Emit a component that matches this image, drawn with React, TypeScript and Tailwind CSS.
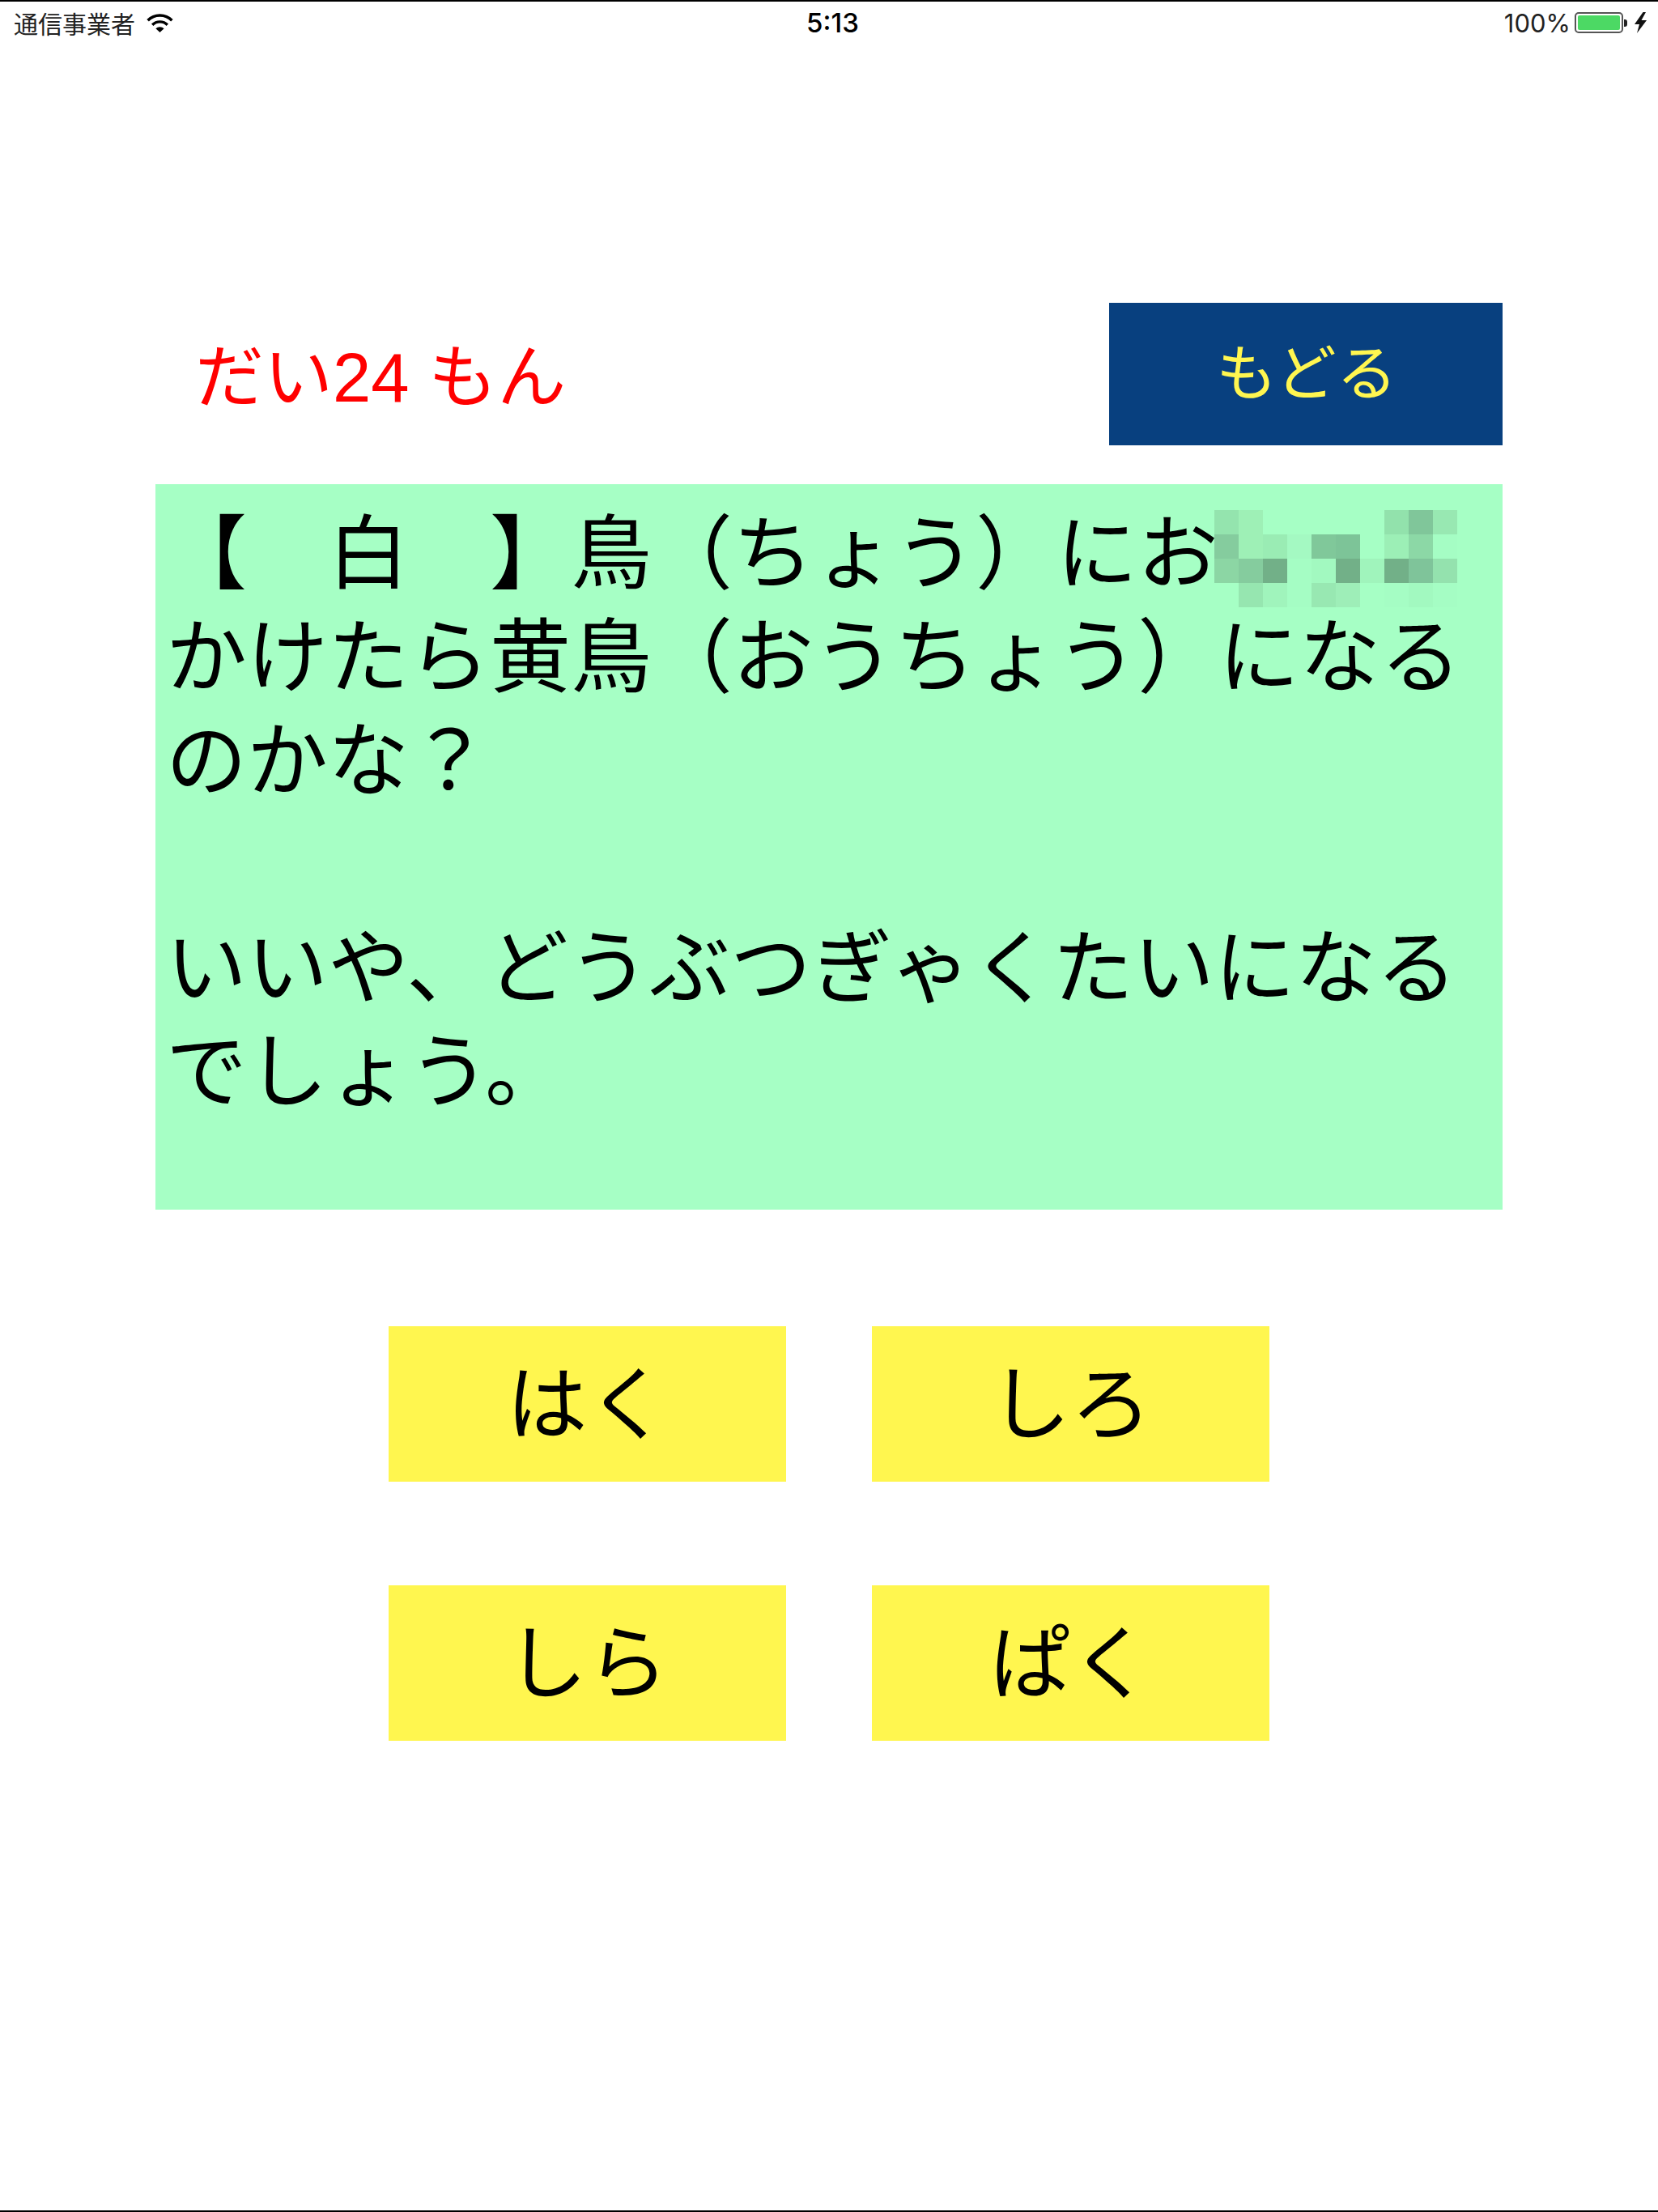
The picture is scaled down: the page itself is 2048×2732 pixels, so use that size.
const CJK = "font-['Liberation_Sans','Noto_Sans_CJK_JP',sans-serif]";

const C: Record<string, string> = {
  a: "bg-[#94e4ae]", b: "bg-[#9ef0b6]", c: "bg-[#92e2ac]", d: "bg-[#80c69a]", e: "bg-[#98e8b2]",
  f: "bg-[#85cc9e]", g: "bg-[#9aecb4]", h: "bg-[#a4f9c2]", i: "bg-[#80c89a]", j: "bg-[#7dc498]",
  k: "bg-[#9cefb6]", l: "bg-[#8cd8a6]", m: "bg-[#a5fdc4]", n: "bg-[#8cd6a4]", o: "bg-[#72b088]",
  p: "bg-[#a2f9c0]", q: "bg-[#a0f4bc]", r: "bg-[#7fc49a]", s: "bg-[#94e2ae]", t: "bg-[#96e6b0]",
  u: "bg-[#9eeeb8]", v: "bg-transparent",
};
const MOSAIC = ["abvvvvvcde", "fbghijvklm", "nfompoqors", "vtqmeuvmpm"];

function Wifi() {
  return (
    <svg viewBox="0 0 33 23" className="w-[33px] h-[23px] ml-[14px]" fill="none" stroke="#000">
      <path d="M1.6 8.2A21 21 0 0 1 31.4 8.2" strokeWidth="3.6" />
      <path d="M7.2 13.8A13 13 0 0 1 25.8 13.8" strokeWidth="3.4" />
      <path d="M11.4 18.2A7.4 7.4 0 0 1 21.6 18.2L16.5 23Z" fill="#000" stroke="none" />
    </svg>
  );
}

function Battery() {
  return (
    <div className="flex items-center ml-[5px]">
      <div className="w-[60px] h-[26px] rounded-[5px] border-2 border-[#555] p-[2px] bg-white">
        <div className="w-full h-full rounded-[2px] bg-[#4cd964]" />
      </div>
      <div className="w-[4px] h-[9px] rounded-r-[3px] bg-[#222] ml-[1px]" />
    </div>
  );
}

function Bolt() {
  return (
    <svg viewBox="0 0 15 26" className="w-[15px] h-[26px] ml-[9px]">
      <path d="M10.5 0L0 15H6L3 26L15 10H8.5L14 0Z" fill="#111" />
    </svg>
  );
}

function Answer({ label }: { label: string }) {
  return (
    <button className="h-[192px] bg-[#fff64f] flex items-center justify-center text-[100px] leading-none text-black pt-[2px]">
      {label}
    </button>
  );
}

export default function App() {
  return (
    <div className={`relative w-[2048px] h-[2732px] bg-white border-t-[2px] border-b-[2px] border-black overflow-hidden ${CJK}`}>
      <header className="h-[54px] pl-[17px] pr-[14px] pb-[2px] grid grid-cols-[1fr_auto_1fr] items-center text-[#111]">
        <div className="flex items-center">
          <span className="text-[30px] leading-none text-[#222] font-['Noto_Sans_CJK_JP',sans-serif]">通信事業者</span>
          <Wifi />
        </div>
        <span className="text-[33px] leading-none font-medium font-['Inter',sans-serif] ml-[6px] text-black">5:13</span>
        <div className="flex items-center justify-end">
          <span className="text-[31px] leading-none font-['Inter',sans-serif] text-[#222]">100%</span>
          <Battery />
          <Bolt />
        </div>
      </header>

      <main className="ml-[192px] w-[1664px] mt-[318px]">
        <div className="flex items-center justify-between h-[176px]">
          <h1 className="ml-[49px] pt-[9px] text-[85px] leading-none text-[#ff0000] font-normal whitespace-pre">だい24 もん</h1>
          <button className="w-[486px] h-full bg-[#08407f] text-[#fff650] text-[75px] leading-none flex items-center justify-center pl-[2px]">
            もどる
          </button>
        </div>

        <section className="relative mt-[48px] h-[896px] bg-[#a6ffc5] pl-[13px] pt-[22px] text-[100px] leading-[128px] text-black whitespace-nowrap">
          <p>【　白　】鳥（ちょう）にお</p>
          <p>かけたら黄鳥（おうちょう）になる</p>
          <p>のかな？</p>
          <p>&nbsp;</p>
          <p>いいや、どうぶつぎゃくたいになる</p>
          <p>でしょう。</p>
          <div aria-hidden className="absolute left-[1308px] top-[32px] grid grid-cols-[repeat(10,30px)] auto-rows-[30px]">
            {MOSAIC.join("").split("").map((k, i) => (
              <div key={i} className={C[k]} />
            ))}
          </div>
        </section>

        <div className="mt-[144px] ml-[288px] w-[1088px] grid grid-cols-2 gap-x-[106px] gap-y-[128px]">
          <Answer label="はく" />
          <Answer label="しろ" />
          <Answer label="しら" />
          <Answer label="ぱく" />
        </div>
      </main>
    </div>
  );
}
